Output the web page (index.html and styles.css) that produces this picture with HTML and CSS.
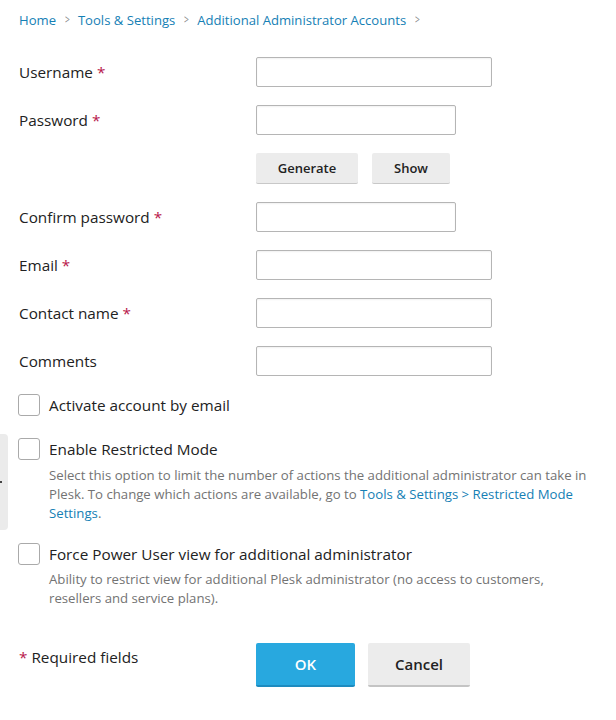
FILE: index.html
```html
<!DOCTYPE html>
<html>
<head>
<meta charset="utf-8">
<link rel="stylesheet" href="styles.css">
</head>
<body>
<div class="side-tab"><span class="side-dot"></span></div>
<div class="page">
  <nav class="crumbs">
    <a class="crumb">Home</a><span class="sep">&gt;</span>
    <a class="crumb">Tools &amp; Settings</a><span class="sep">&gt;</span>
    <a class="crumb">Additional Administrator Accounts</a><span class="sep">&gt;</span>
  </nav>

  <form class="form">
    <div class="row">
      <label class="lbl">Username <span class="req">*</span></label>
      <input class="inp wide" type="text">
    </div>
    <div class="row">
      <label class="lbl">Password <span class="req">*</span></label>
      <input class="inp narrow" type="text">
    </div>
    <div class="row">
      <span class="lbl"></span>
      <div class="btns">
        <button type="button" class="btn gen">Generate</button>
        <button type="button" class="btn show">Show</button>
      </div>
    </div>
    <div class="row">
      <label class="lbl">Confirm password <span class="req">*</span></label>
      <input class="inp narrow" type="text">
    </div>
    <div class="row">
      <label class="lbl">Email <span class="req">*</span></label>
      <input class="inp wide" type="text">
    </div>
    <div class="row">
      <label class="lbl">Contact name <span class="req">*</span></label>
      <input class="inp wide" type="text">
    </div>
    <div class="row">
      <label class="lbl">Comments</label>
      <input class="inp wide" type="text">
    </div>

    <div class="check c1">
      <span class="box"></span>
      <div class="check-body">
        <div class="check-lbl">Activate account by email</div>
      </div>
    </div>
    <div class="check c2">
      <span class="box"></span>
      <div class="check-body">
        <div class="check-lbl">Enable Restricted Mode</div>
        <div class="desc d1">Select this option to limit the number of actions the additional administrator can take in Plesk. To change which actions are available, go to <a class="link">Tools &amp; Settings &gt; Restricted Mode</a> <a class="link">Settings</a>.</div>
      </div>
    </div>
    <div class="check c3">
      <span class="box"></span>
      <div class="check-body">
        <div class="check-lbl">Force Power User view for additional administrator</div>
        <div class="desc d2">Ability to restrict view for additional Plesk administrator (no access to customers,<br>resellers and service plans).</div>
      </div>
    </div>

    <div class="footer">
      <div class="reqnote"><span class="req">*</span> Required fields</div>
      <div class="actions">
        <button type="button" class="act ok">OK</button>
        <button type="button" class="act cancel">Cancel</button>
      </div>
    </div>
  </form>
</div>
</body>
</html>
```
FILE: styles.css
```css
html, body {
  margin: 0;
  padding: 0;
  background: #fff;
}
body {
  font-family: "Open Sans", "Liberation Sans", sans-serif;
  color: #222;
  width: 616px;
  height: 720px;
  overflow: hidden;
  position: relative;
}
.side-tab {
  position: absolute;
  left: 0;
  top: 434px;
  width: 8px;
  height: 96px;
  background: #ebebeb;
  border-radius: 0 4px 4px 0;
}
.side-dot {
  position: absolute;
  left: 0;
  top: 47px;
  width: 2px;
  height: 2px;
  background: #444;
}
.page {
  padding: 11px 10px 0 19px;
}
.crumbs {
  font-size: 13.1px;
  line-height: 18px;
  display: flex;
  align-items: center;
}
.crumb {
  color: #1580b5;
}
.sep {
  color: #888;
  margin: 0 7px 0 8px;
  font-size: 12px;
  transform: scaleX(0.7);
  display: inline-block;
}
.form {
  margin-top: 28px;
}
.row {
  display: flex;
  align-items: center;
  margin-bottom: 18px;
}
.lbl {
  width: 237px;
  font-size: 15.3px;
  line-height: 20px;
  color: #222;
  flex: none;
  margin-top: -1px;
}
.req {
  color: #b8164a;
}
.inp {
  box-sizing: border-box;
  height: 30px;
  border: 1px solid #b5b5b5;
  border-radius: 2px;
  box-shadow: inset 0 1px 2px rgba(0,0,0,0.06);
  background: #fff;
  margin: 0;
  padding: 0 6px;
}
.wide { width: 236px; }
.narrow { width: 200px; }
.btns {
  display: flex;
  gap: 14px;
}
.btn {
  box-sizing: border-box;
  height: 31px;
  border: none;
  border-bottom: 1px solid #c8c8c8;
  border-radius: 2px;
  background: #ececec;
  font-family: "Open Sans", "Liberation Sans", sans-serif;
  font-weight: 600;
  font-size: 13px;
  color: #222;
  padding: 0;
}
.gen { width: 102px; }
.show { width: 78px; }

.check {
  display: flex;
  align-items: flex-start;
}
.c1 { margin-top: 1px; }
.c2 { margin-top: 22px; }
.c3 { margin-top: 20px; }
.box {
  box-sizing: border-box;
  width: 22px;
  height: 22px;
  border: 1px solid #aaa;
  border-radius: 3px;
  background: #fff;
  flex: none;
  margin-left: -1px;
}
.check-body {
  margin-left: 9px;
}
.check-lbl {
  font-size: 15.3px;
  line-height: 22px;
  color: #222;
}
.desc {
  font-size: 13.2px;
  line-height: 19px;
  color: #737373;
  margin-top: 6px;
}
.d1 {
  width: 552px;
}
.d2 {
  margin-top: 5px;
}
.link {
  color: #1580b5;
}
.footer {
  display: flex;
  align-items: flex-start;
  margin-top: 35px;
}
.reqnote {
  width: 237px;
  font-size: 15.3px;
  line-height: 22px;
  color: #222;
  padding-top: 3px;
}
.actions {
  display: flex;
  gap: 13px;
}
.act {
  box-sizing: border-box;
  height: 44px;
  border: none;
  border-radius: 2px;
  font-family: "Open Sans", "Liberation Sans", sans-serif;
  font-weight: 600;
  font-size: 15px;
  padding: 0;
}
.ok {
  width: 99px;
  background: #28a8df;
  border-bottom: 2px solid #1d8bbf;
  color: #fff;
}
.cancel {
  width: 102px;
  background: #ececec;
  border-bottom: 2px solid #c4c4c4;
  color: #222;
}
```
